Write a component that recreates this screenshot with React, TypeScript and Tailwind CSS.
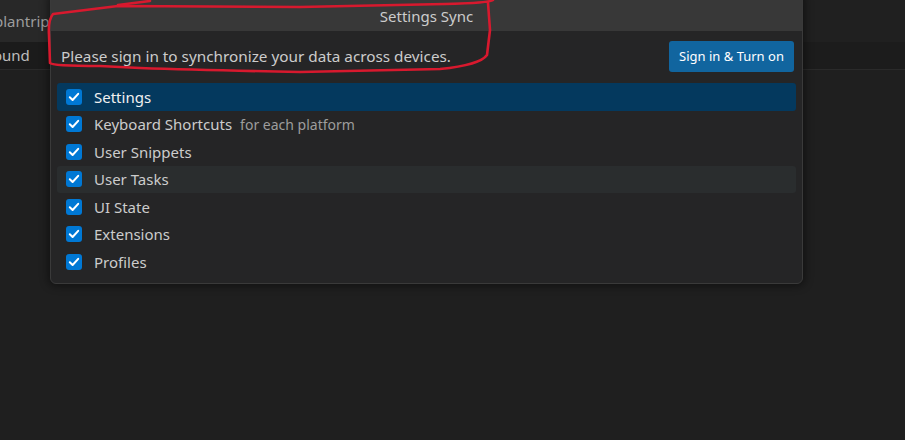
import React from 'react';

const items: { label: string; desc?: string; selected?: boolean; hover?: boolean }[] = [
  { label: 'Settings', selected: true },
  { label: 'Keyboard Shortcuts', desc: 'for each platform' },
  { label: 'User Snippets' },
  { label: 'User Tasks', hover: true },
  { label: 'UI State' },
  { label: 'Extensions' },
  { label: 'Profiles' },
];

function CheckBox() {
  return (
    <div className="w-4 h-4 rounded-[3px] bg-[#0078d4] flex items-center justify-center shrink-0">
      <svg width="16" height="16" viewBox="0 0 16 16" fill="none">
        <path d="M3.8 8.3 L6.6 11 L12.2 4.8" stroke="#ffffff" strokeWidth="2" strokeLinecap="round" strokeLinejoin="round" />
      </svg>
    </div>
  );
}

export default function App() {
  return (
    <div
      className="relative w-[905px] h-[440px] overflow-hidden bg-[#1f1f1f]"
      style={{ fontFamily: '"Noto Sans", "Open Sans", sans-serif' }}
    >
      {/* editor chrome behind the dialog */}
      <div className="flex h-[42px]">
        <div className="w-[60px] bg-[#282828] flex items-center text-[15px] text-[#9d9d9d] -ml-[6px]">
          plantrip
        </div>
        <div className="flex-1 bg-[#202020]"></div>
      </div>
      <div className="flex h-[28px] border-b border-[#2a2a2a]">
        <div className="w-[60px] bg-[#1b1b1b] flex items-center text-[15px] text-[#bdbdbd] -ml-[8px] pl-[1px]">
          ound
        </div>
        <div className="flex-1 bg-[#1c1c1c]"></div>
      </div>

      {/* quick input dialog */}
      <div className="absolute left-[50px] top-[-6px] w-[753px] rounded-[6px] border border-[#3a3a3a] bg-[#252526] shadow-[0_0_8px_2px_rgba(0,0,0,0.45)] overflow-hidden">
        <div className="h-[36px] pt-[6px] bg-[#383838] flex items-center justify-center text-[15px] text-[#cccccc]">
          Settings Sync
        </div>
        <div className="flex items-center justify-between pl-[10px] pr-[8px] pt-[10px]">
          <span className="text-[15.3px] text-[#cccccc]">Please sign in to synchronize your data across devices.</span>
          <button className="h-[31px] w-[125px] rounded-[3px] bg-[#11659f] text-white text-[13px]">
            Sign in &amp; Turn on
          </button>
        </div>
        <div className="mt-[11px] px-[6px] pb-[7px] flex flex-col">
          {items.map((it) => (
            <div
              key={it.label}
              className={
                'h-[27.5px] rounded-[3px] flex items-center pl-[9px] gap-[12px] ' +
                (it.selected ? 'bg-[#04395e]' : it.hover ? 'bg-[#2a2d2e]' : '')
              }
            >
              <CheckBox />
              <span className={'text-[15px] ' + (it.selected ? 'text-[#f0f0f0]' : 'text-[#cccccc]')}>{it.label}</span>
              {it.desc && <span className="text-[14px] text-[#9d9d9d] -ml-[4px]">{it.desc}</span>}
            </div>
          ))}
        </div>
      </div>

      {/* red hand-drawn annotation */}
      <svg className="absolute inset-0 pointer-events-none" width="905" height="440" viewBox="0 0 905 440" fill="none">
        <path d="M150 1 L118 5" stroke="#d8192e" strokeWidth="2.6" strokeLinecap="round" />
        <path
          d="M493 0 Q489 3 445 4 L300 7 L118 6 L53 14 Q48 20 49 35 L50 63 Q52 66 100 66 L140 68 Q200 70 300 72 L440 69 Q480 65 487 55 L490 30 L488 3"
          stroke="#d8192e"
          strokeWidth="2.6"
          strokeLinecap="round"
          strokeLinejoin="round"
        />
      </svg>
    </div>
  );
}
